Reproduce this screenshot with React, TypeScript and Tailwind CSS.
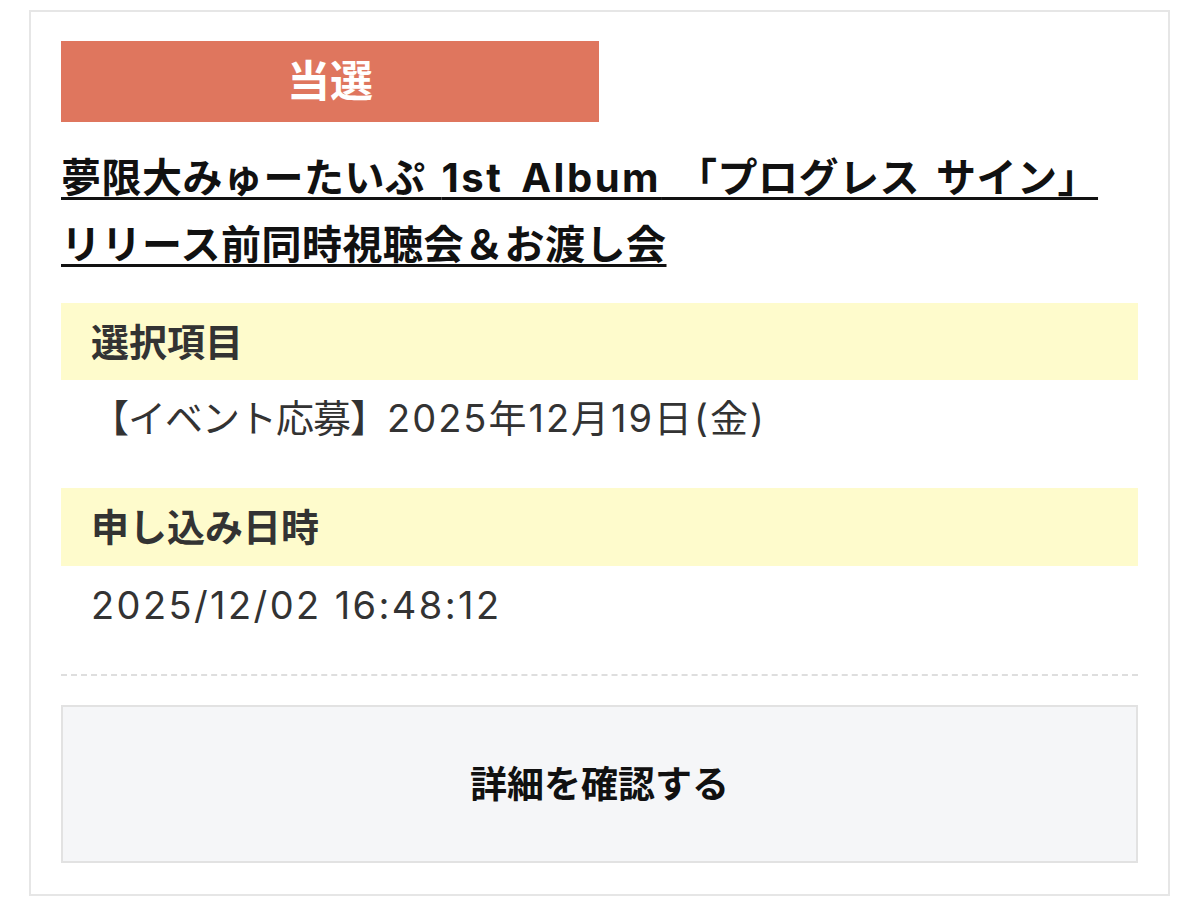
import React from "react";

export default function App() {
  const font = { fontFamily: '"Inter", "Noto Sans CJK JP", "Noto Sans", sans-serif' };
  return (
    <div className="w-[1200px] h-[914px] bg-white" style={font}>
      <div className="ml-[29px] mt-[10px] w-[1141px] border-2 border-[#e6e6e6] px-[30px] pt-[29px] pb-[31px]">
        <div className="w-[538px] h-[81px] bg-[#df765e] flex items-center justify-center text-white font-bold text-[43px] leading-none">
          当選
        </div>
        <div className="mt-[22px] text-[40px] leading-[67px] font-bold text-[#111] underline decoration-[3px] underline-offset-[5px] tracking-[0.5px] [word-spacing:6px]">
          夢限大みゅーたいぷ <span className="tracking-[2.5px]">1st Album</span> 「プログレス サイン」
          <br />
          リリース前同時視聴会＆お渡し会
        </div>
        <div className="mt-[25px] h-[77px] bg-[#fefbcc] px-[30px] flex items-center text-[38px] font-bold text-[#333] leading-none">
          選択項目
        </div>
        <div className="h-[76px] px-[30px] flex items-center text-[38px] text-[#333] leading-none whitespace-pre">
          <span className="tracking-[-1px]">【イベント応募】</span>
          <span className="tracking-[2px]">2025年12月19日(金)</span>
        </div>
        <div className="mt-[32px] h-[78px] bg-[#fefbcc] px-[30px] flex items-center text-[38px] font-bold text-[#333] leading-none">
          申し込み日時
        </div>
        <div className="h-[78px] px-[30px] flex items-center text-[38px] text-[#333] leading-none tracking-[2.4px]">
          2025/12/02 16:48:12
        </div>
        <div className="mt-[30px] border-t-2 border-dashed border-[#dedede]" />
        <div className="mt-[29px] h-[158px] border-2 border-[#e2e2e2] bg-[#f5f6f8] flex items-center justify-center text-[37px] font-bold text-[#111] leading-none">
          詳細を確認する
        </div>
      </div>
    </div>
  );
}
